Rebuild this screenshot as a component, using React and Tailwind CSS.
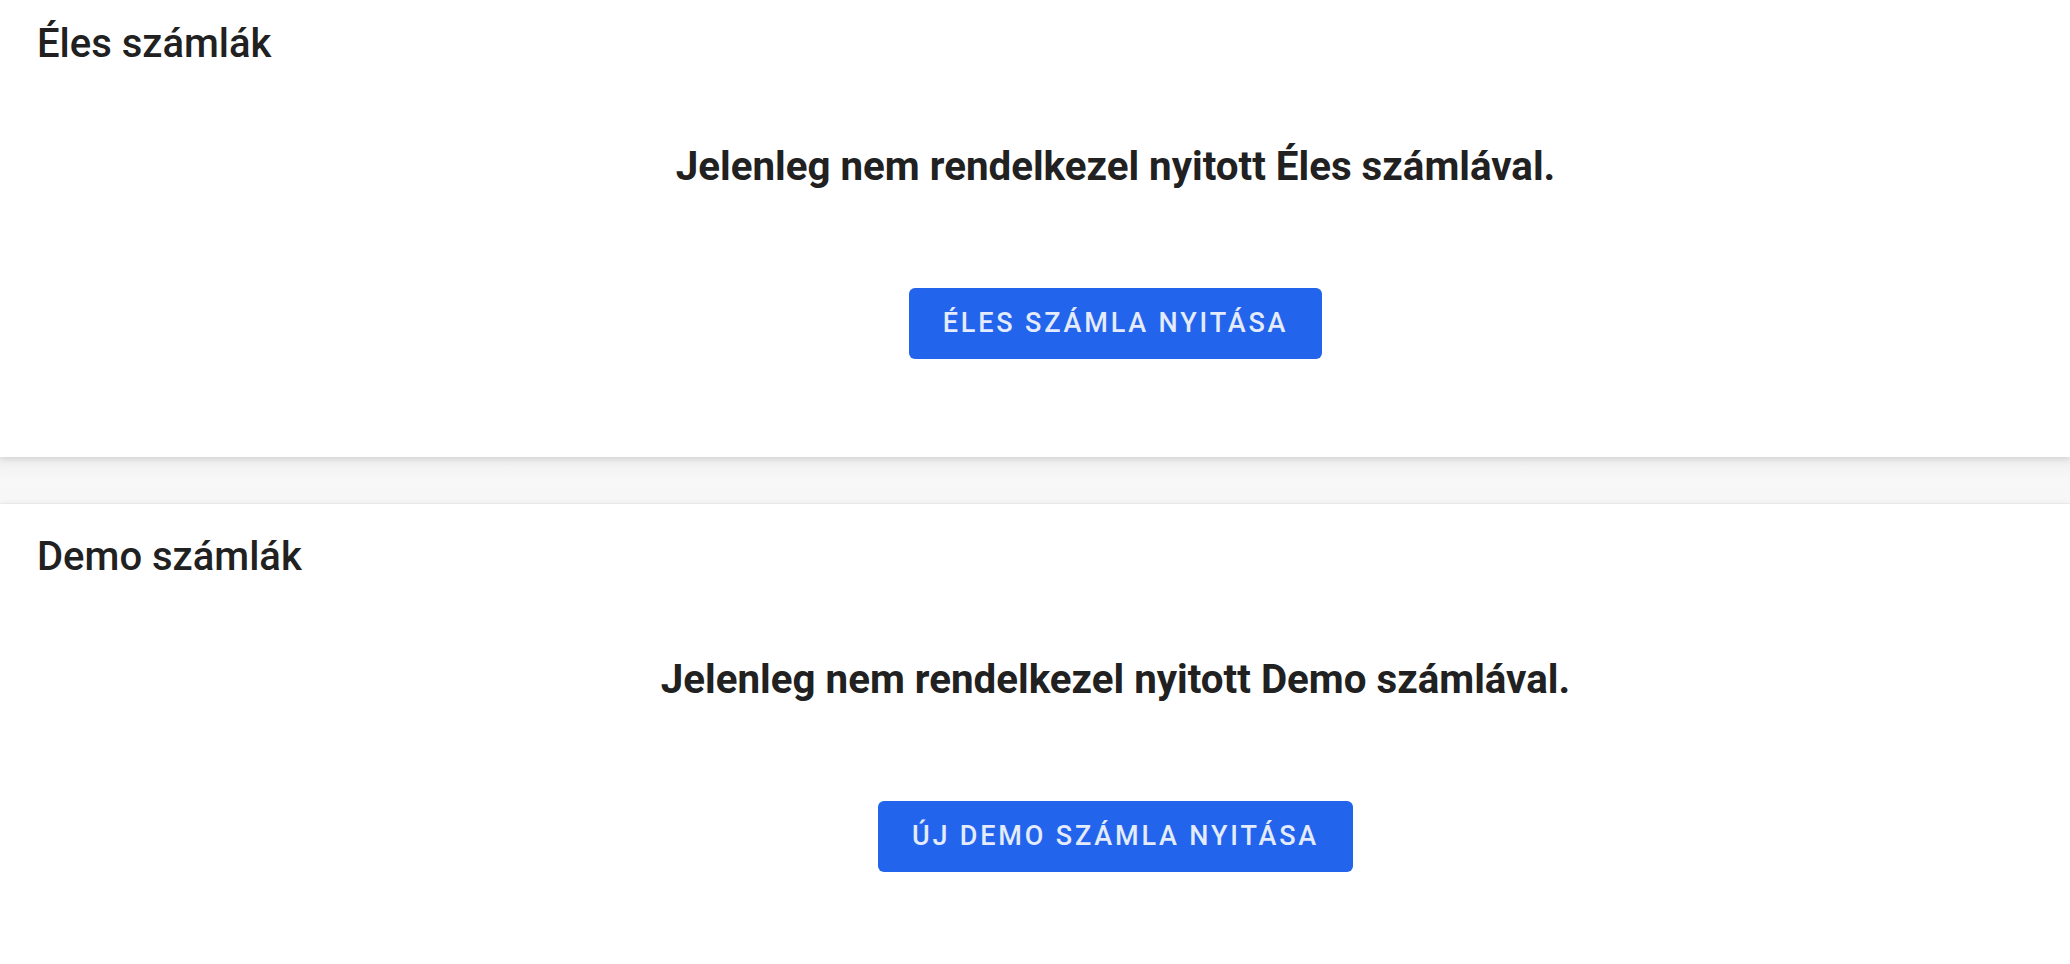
const sections = [
  {
    title: 'Éles számlák',
    message: 'Jelenleg nem rendelkezel nyitott Éles számlával.',
    action: 'Éles számla nyitása',
    top: 'pt-[22px]',
  },
  {
    title: 'Demo számlák',
    message: 'Jelenleg nem rendelkezel nyitott Demo számlával.',
    action: 'Új demo számla nyitása',
    top: 'pt-[31px]',
  },
];

const AccountSection = ({ title, message, action, top }) => {
  return (
    <section
      className={`relative z-10 bg-white pb-[98px] px-[37px] shadow-[0_2px_7px_rgba(0,0,0,0.13)] ${top}`}
    >
      <h2 className="text-[40px] leading-[44px] font-medium text-[#212121]">
        {title}
      </h2>

      <div className="flex flex-col items-center pl-[161px]">
        <p className="mt-[77px] text-[40.3px] leading-[48px] font-bold text-[#212121]">
          {message}
        </p>

        <button
          type="button"
          className="mt-[97px] h-[71px] px-[34px] rounded-[6px] bg-[#2264ec] text-[#e3ebfc] text-[27px] font-medium uppercase tracking-[0.105em]"
        >
          {action}
        </button>
      </div>
    </section>
  );
};

export default function App() {
  return (
    <div
      className="min-h-screen bg-[#f8f8f8]"
      style={{ fontFamily: 'Roboto, "Liberation Sans", sans-serif' }}
    >
      <AccountSection {...sections[0]} />
      <div className="h-[47px] bg-gradient-to-b from-[#efefef] via-[#f8f8f8] to-[#f7f7f7] border-b border-[#f0f0f0]" />
      <AccountSection {...sections[1]} />
    </div>
  );
}
